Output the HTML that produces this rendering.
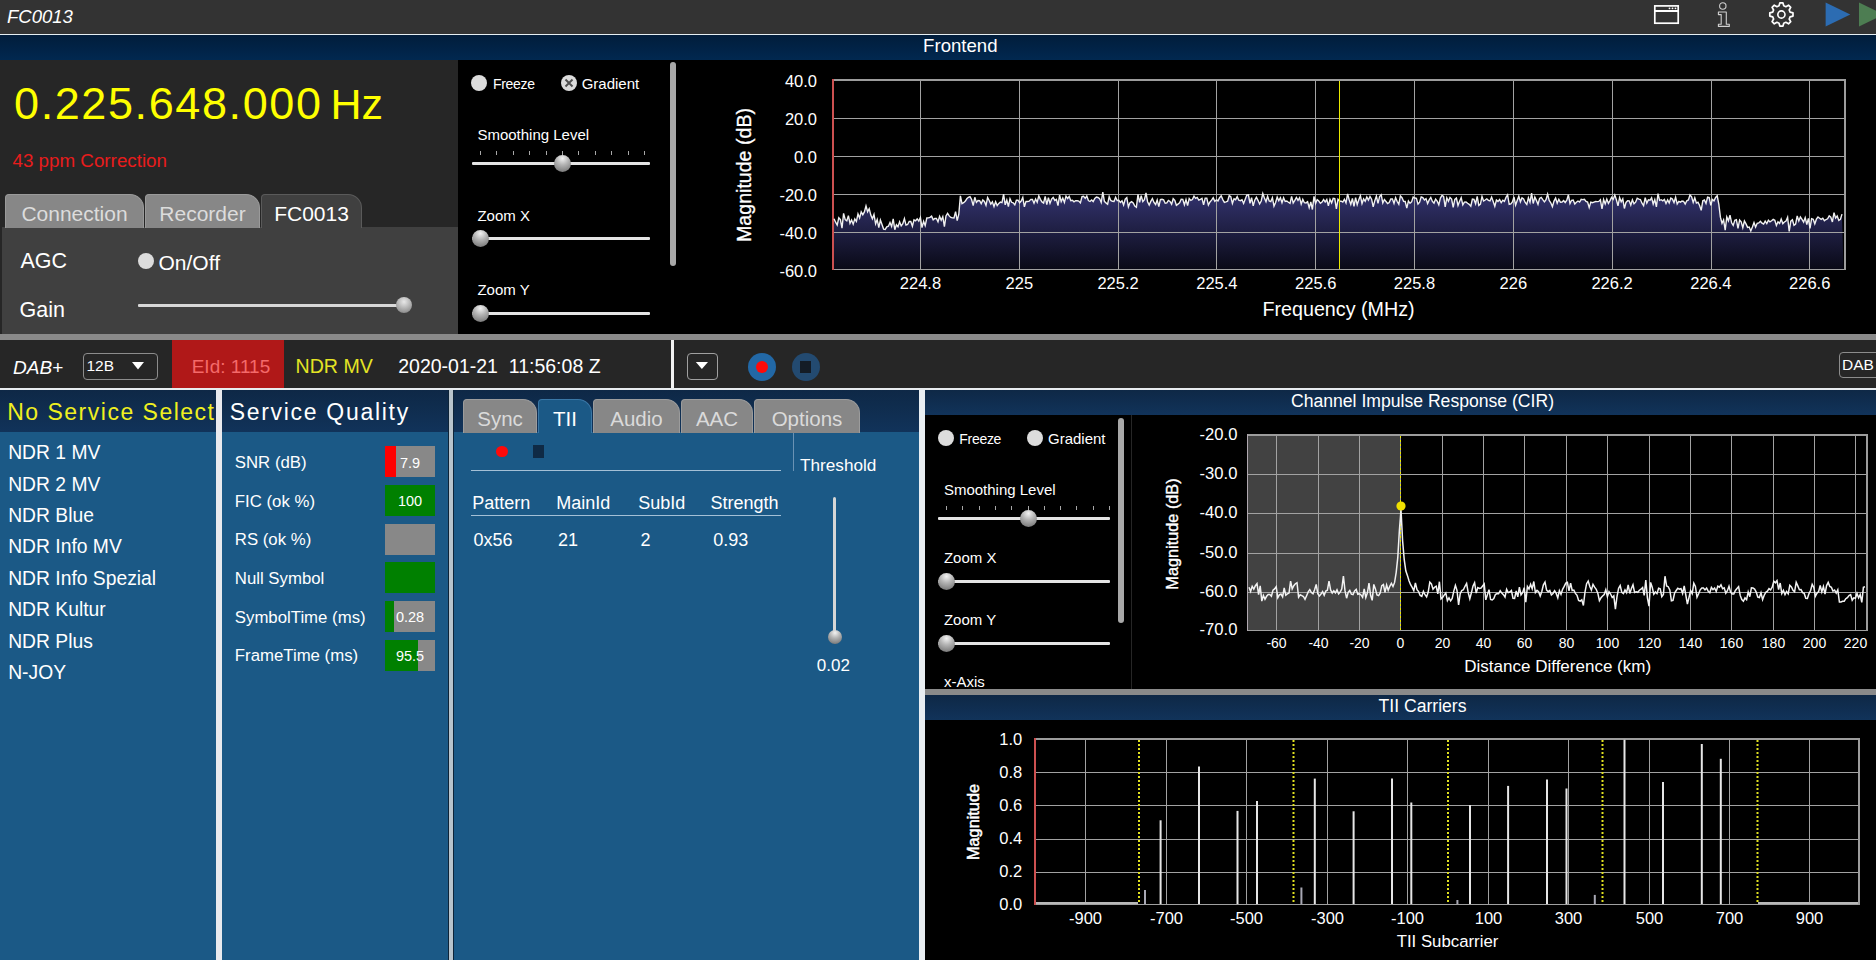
<!DOCTYPE html>
<html><head><meta charset="utf-8"><style>
html,body{margin:0;padding:0;}
body{width:1876px;height:960px;position:relative;overflow:hidden;background:#000;font-family:"Liberation Sans", sans-serif;}
div{box-sizing:border-box;}
</style></head><body>
<div style="position:absolute;left:0px;top:0px;width:1876px;height:34px;background:#333333;"></div><div style="position:absolute;left:0px;top:34px;width:1876px;height:1px;background:#e6eef2;"></div><div style="position:absolute;left:7px;top:8.34px;font-size:18.5px;line-height:18.5px;color:#fff;white-space:nowrap;font-style:italic;">FC0013</div><svg style="position:absolute;left:0;top:0" width="1876" height="34"><rect x="1654.8" y="5.9" width="23.4" height="17.3" fill="none" stroke="#fff" stroke-width="1.7"/><rect x="1654.8" y="10" width="23.4" height="2" fill="#fff"/><circle cx="1669.5" cy="8.3" r="0.9" fill="#fff"/><circle cx="1672.5" cy="8.3" r="0.9" fill="#fff"/><circle cx="1675.5" cy="8.3" r="0.9" fill="#fff"/><circle cx="1722.8" cy="6" r="3.2" fill="none" stroke="#d0d0d0" stroke-width="1.1"/><path d="M1718.4 12 L1726.3 12 L1726.3 24.2 L1729.3 24.2 L1729.3 26.4 L1718.4 26.4 L1718.4 24.2 L1721.2 24.2 L1721.2 14.6 L1718.4 14.6 Z" fill="none" stroke="#d0d0d0" stroke-width="1.1" stroke-linejoin="round"/><path d="M1779.03 5.82 L1779.84 2.90 L1782.96 2.90 L1783.77 5.82 L1785.86 6.68 L1788.50 5.20 L1790.70 7.40 L1789.22 10.04 L1790.08 12.13 L1793.00 12.94 L1793.00 16.06 L1790.08 16.87 L1789.22 18.96 L1790.70 21.60 L1788.50 23.80 L1785.86 22.32 L1783.77 23.18 L1782.96 26.10 L1779.84 26.10 L1779.03 23.18 L1776.94 22.32 L1774.30 23.80 L1772.10 21.60 L1773.58 18.96 L1772.72 16.87 L1769.80 16.06 L1769.80 12.94 L1772.72 12.13 L1773.58 10.04 L1772.10 7.40 L1774.30 5.20 L1776.94 6.68 Z" fill="none" stroke="#fff" stroke-width="1.7" stroke-linejoin="round"/><circle cx="1781.4" cy="14.5" r="3.6" fill="none" stroke="#fff" stroke-width="1.6"/><path d="M1825.6 2.5 L1850.3 14.5 L1825.6 26.6 Z" fill="#2c6cb2"/><path d="M1859 2.5 L1883.7 14.5 L1859 26.6 Z" fill="#4d7d52"/></svg><div style="position:absolute;left:0px;top:35px;width:1876px;height:25px;background:linear-gradient(#011d3b,#012850);"></div><div style="position:absolute;left:660.3px;width:600px;text-align:center;top:36.96px;font-size:18.6px;line-height:18.6px;color:#fff;white-space:nowrap;">Frontend</div><div style="position:absolute;left:0px;top:60px;width:458px;height:274px;background:#262626;"></div><div style="position:absolute;left:14px;top:80.91px;font-size:45px;line-height:45px;color:#ffff00;white-space:nowrap;letter-spacing:1.6px;">0.225.648.000</div><div style="position:absolute;left:330.5px;top:82.60px;font-size:43px;line-height:43px;color:#ffff00;white-space:nowrap;">Hz</div><div style="position:absolute;left:12.5px;top:151.89px;font-size:18.8px;line-height:18.8px;color:#e81c1c;white-space:nowrap;">43 ppm Correction</div><div style="position:absolute;left:2px;top:227px;width:456px;height:107px;background:#404040;"></div><div style="position:absolute;left:5px;top:194px;width:139px;height:34px;background:#878787;border-radius:4px 14px 0 0;border:1px solid #9a9a9a;border-bottom:none;"></div><div style="position:absolute;left:-225.5px;width:600px;text-align:center;top:203.22px;font-size:21px;line-height:21px;color:#dcdcdc;white-space:nowrap;">Connection</div><div style="position:absolute;left:145px;top:194px;width:115px;height:34px;background:#878787;border-radius:4px 14px 0 0;border:1px solid #9a9a9a;border-bottom:none;"></div><div style="position:absolute;left:-97.5px;width:600px;text-align:center;top:203.22px;font-size:21px;line-height:21px;color:#dcdcdc;white-space:nowrap;">Recorder</div><div style="position:absolute;left:261px;top:194px;width:101px;height:34px;background:#404040;border-radius:4px 14px 0 0;border:1px solid #5a5a5a;border-bottom:none;"></div><div style="position:absolute;left:11.5px;width:600px;text-align:center;top:203.22px;font-size:21px;line-height:21px;color:#ffffff;white-space:nowrap;">FC0013</div><div style="position:absolute;left:20.5px;top:250.80px;font-size:21.5px;line-height:21.5px;color:#fff;white-space:nowrap;">AGC</div><div style="position:absolute;left:138px;top:252.5px;width:16px;height:16px;border-radius:50%;background:#dcdcdc;"></div><div style="position:absolute;left:158.5px;top:251.92px;font-size:21px;line-height:21px;color:#fff;white-space:nowrap;">On/Off</div><div style="position:absolute;left:19.5px;top:300.30px;font-size:21.5px;line-height:21.5px;color:#fff;white-space:nowrap;">Gain</div><div style="position:absolute;left:138px;top:304px;width:264px;height:3px;background:#d8d8d8;border-radius:1px;"></div><div style="position:absolute;left:396px;top:297px;width:16px;height:16px;border-radius:50%;background:radial-gradient(circle at 50% 30%,#e8e8e8,#9a9a9a 70%,#707070);"></div><div style="position:absolute;left:458px;top:60px;width:1418px;height:274px;background:#000;"></div><div style="position:absolute;left:471px;top:75.3px;width:16px;height:16px;border-radius:50%;background:#dcdcdc;"></div><div style="position:absolute;left:492.9px;top:77.15px;font-size:14px;line-height:14px;color:#fff;white-space:nowrap;letter-spacing:-0.3px;">Freeze</div><div style="position:absolute;left:560.5px;top:75.3px;width:16px;height:16px;border-radius:50%;background:#dcdcdc;"></div><svg style="position:absolute;left:560.5px;top:75.3px;" width="16" height="16"><path d="M4.5 4.5L11.5 11.5M11.5 4.5L4.5 11.5" stroke="#505050" stroke-width="1.9"/></svg><div style="position:absolute;left:581.7px;top:76.30px;font-size:15px;line-height:15px;color:#fff;white-space:nowrap;">Gradient</div><div style="position:absolute;left:477.4px;top:127.00px;font-size:15px;line-height:15px;color:#fff;white-space:nowrap;">Smoothing Level</div><div style="position:absolute;left:480px;top:150.5px;width:1px;height:4px;background:#a8a8a8;"></div><div style="position:absolute;left:496px;top:150.5px;width:1px;height:4px;background:#a8a8a8;"></div><div style="position:absolute;left:513px;top:150.5px;width:1px;height:4px;background:#a8a8a8;"></div><div style="position:absolute;left:529px;top:150.5px;width:1px;height:4px;background:#a8a8a8;"></div><div style="position:absolute;left:546px;top:150.5px;width:1px;height:4px;background:#a8a8a8;"></div><div style="position:absolute;left:562px;top:150.5px;width:1px;height:4px;background:#a8a8a8;"></div><div style="position:absolute;left:578px;top:150.5px;width:1px;height:4px;background:#a8a8a8;"></div><div style="position:absolute;left:595px;top:150.5px;width:1px;height:4px;background:#a8a8a8;"></div><div style="position:absolute;left:611px;top:150.5px;width:1px;height:4px;background:#a8a8a8;"></div><div style="position:absolute;left:628px;top:150.5px;width:1px;height:4px;background:#a8a8a8;"></div><div style="position:absolute;left:644px;top:150.5px;width:1px;height:4px;background:#a8a8a8;"></div><div style="position:absolute;left:472px;top:161.8px;width:178px;height:3px;background:#e4e4e4;border-radius:1px;"></div><div style="position:absolute;left:553.5px;top:154.8px;width:17.0px;height:17.0px;border-radius:50%;background:radial-gradient(circle at 50% 20%,#f2f2f2 0%,#b4b4b4 40%,#6e6e6e 95%);"></div><div style="position:absolute;left:477.4px;top:207.70px;font-size:15px;line-height:15px;color:#fff;white-space:nowrap;">Zoom X</div><div style="position:absolute;left:472px;top:236.7px;width:178px;height:3px;background:#e4e4e4;border-radius:1px;"></div><div style="position:absolute;left:471.5px;top:229.7px;width:17.0px;height:17.0px;border-radius:50%;background:radial-gradient(circle at 50% 20%,#f2f2f2 0%,#b4b4b4 40%,#6e6e6e 95%);"></div><div style="position:absolute;left:477.4px;top:282.00px;font-size:15px;line-height:15px;color:#fff;white-space:nowrap;">Zoom Y</div><div style="position:absolute;left:472px;top:311.9px;width:178px;height:3px;background:#e4e4e4;border-radius:1px;"></div><div style="position:absolute;left:471.5px;top:304.9px;width:17.0px;height:17.0px;border-radius:50%;background:radial-gradient(circle at 50% 20%,#f2f2f2 0%,#b4b4b4 40%,#6e6e6e 95%);"></div><div style="position:absolute;left:670px;top:62px;width:6px;height:204px;background:#a8a8a8;border-radius:3px;"></div><svg style="position:absolute;left:0;top:0;" width="1876" height="960"><defs><linearGradient id="sg" x1="0" y1="195" x2="0" y2="269" gradientUnits="userSpaceOnUse"><stop offset="0" stop-color="#32326c"/><stop offset="1" stop-color="#0a0a17"/></linearGradient></defs><path d="M834.0 218.8 L835.6 222.2 L837.2 225.1 L838.8 217.8 L840.4 219.5 L842.0 228.2 L843.6 213.3 L845.2 219.7 L846.8 220.9 L848.4 215.6 L850.0 223.4 L851.6 220.0 L853.2 224.2 L854.8 218.9 L856.4 221.5 L858.0 213.9 L859.6 217.9 L861.2 211.8 L862.8 214.7 L864.4 211.9 L866.0 205.9 L867.6 211.8 L869.2 208.7 L870.8 215.1 L872.4 218.8 L874.0 214.5 L875.6 223.8 L877.2 219.5 L878.8 227.7 L880.4 220.1 L882.0 224.5 L883.6 229.1 L885.2 229.4 L886.8 226.8 L888.4 226.2 L890.0 222.5 L891.6 226.4 L893.2 218.9 L894.8 229.7 L896.4 224.7 L898.0 226.7 L899.6 221.9 L901.2 225.9 L902.8 223.6 L904.4 218.6 L906.0 225.1 L907.6 224.5 L909.2 221.4 L910.8 221.5 L912.4 226.2 L914.0 219.9 L915.6 220.8 L917.2 218.8 L918.8 221.1 L920.4 217.5 L922.0 227.7 L923.6 221.4 L925.2 225.6 L926.8 218.0 L928.4 217.9 L930.0 217.4 L931.6 216.1 L933.2 219.8 L934.8 218.5 L936.4 218.5 L938.0 221.8 L939.6 216.3 L941.2 220.3 L942.8 216.7 L944.4 226.7 L946.0 216.0 L947.6 213.4 L949.2 215.9 L950.8 217.4 L952.4 217.9 L954.0 218.0 L955.6 211.6 L957.2 220.6 L958.8 214.2 L960.4 195.8 L962.0 203.6 L963.6 202.7 L965.2 201.3 L966.8 198.8 L968.4 197.3 L970.0 196.6 L971.6 199.5 L973.2 205.7 L974.8 197.3 L976.4 202.4 L978.0 200.5 L979.6 200.7 L981.2 203.7 L982.8 199.9 L984.4 201.4 L986.0 205.3 L987.6 197.6 L989.2 200.5 L990.8 204.1 L992.4 201.8 L994.0 206.6 L995.6 201.7 L997.2 205.5 L998.8 203.4 L1000.4 202.1 L1002.0 202.6 L1003.6 194.2 L1005.2 204.8 L1006.8 200.0 L1008.4 206.5 L1010.0 198.7 L1011.6 202.3 L1013.2 202.8 L1014.8 204.9 L1016.4 200.2 L1018.0 200.2 L1019.6 202.8 L1021.2 201.0 L1022.8 197.4 L1024.4 206.8 L1026.0 201.4 L1027.6 201.5 L1029.2 201.2 L1030.8 199.4 L1032.4 199.5 L1034.0 203.2 L1035.6 199.0 L1037.2 202.2 L1038.8 195.9 L1040.4 199.3 L1042.0 201.9 L1043.6 203.0 L1045.2 196.3 L1046.8 204.6 L1048.4 197.6 L1050.0 203.3 L1051.6 199.1 L1053.2 197.5 L1054.8 200.4 L1056.4 199.4 L1058.0 205.7 L1059.6 195.1 L1061.2 201.6 L1062.8 198.1 L1064.4 202.4 L1066.0 196.2 L1067.6 198.5 L1069.2 196.5 L1070.8 200.7 L1072.4 200.3 L1074.0 201.8 L1075.6 200.7 L1077.2 200.8 L1078.8 201.1 L1080.4 202.9 L1082.0 196.5 L1083.6 196.2 L1085.2 198.4 L1086.8 196.0 L1088.4 200.6 L1090.0 201.5 L1091.6 200.0 L1093.2 201.6 L1094.8 198.4 L1096.4 197.0 L1098.0 197.5 L1099.6 198.6 L1101.2 202.4 L1102.8 192.2 L1104.4 201.3 L1106.0 202.9 L1107.6 204.2 L1109.2 196.7 L1110.8 200.5 L1112.4 201.3 L1114.0 201.5 L1115.6 197.2 L1117.2 200.5 L1118.8 200.3 L1120.4 202.5 L1122.0 200.8 L1123.6 205.0 L1125.2 199.2 L1126.8 197.7 L1128.4 206.8 L1130.0 202.6 L1131.6 201.6 L1133.2 202.9 L1134.8 206.0 L1136.4 207.2 L1138.0 194.3 L1139.6 202.3 L1141.2 195.6 L1142.8 201.6 L1144.4 199.6 L1146.0 193.0 L1147.6 201.7 L1149.2 205.1 L1150.8 201.4 L1152.4 198.6 L1154.0 202.5 L1155.6 204.6 L1157.2 199.9 L1158.8 206.6 L1160.4 199.7 L1162.0 199.3 L1163.6 199.9 L1165.2 203.3 L1166.8 202.9 L1168.4 200.4 L1170.0 201.5 L1171.6 204.3 L1173.2 198.7 L1174.8 200.3 L1176.4 205.3 L1178.0 204.1 L1179.6 202.9 L1181.2 199.2 L1182.8 199.4 L1184.4 204.9 L1186.0 199.6 L1187.6 205.6 L1189.2 198.6 L1190.8 200.4 L1192.4 199.6 L1194.0 196.2 L1195.6 198.4 L1197.2 197.4 L1198.8 200.0 L1200.4 199.3 L1202.0 198.3 L1203.6 204.9 L1205.2 198.1 L1206.8 198.1 L1208.4 205.1 L1210.0 202.0 L1211.6 200.2 L1213.2 197.7 L1214.8 201.4 L1216.4 199.8 L1218.0 200.9 L1219.6 197.7 L1221.2 195.8 L1222.8 199.6 L1224.4 202.4 L1226.0 201.9 L1227.6 201.2 L1229.2 195.7 L1230.8 196.7 L1232.4 203.4 L1234.0 198.8 L1235.6 199.7 L1237.2 196.7 L1238.8 200.2 L1240.4 200.7 L1242.0 199.8 L1243.6 203.4 L1245.2 199.3 L1246.8 195.1 L1248.4 194.9 L1250.0 203.3 L1251.6 197.6 L1253.2 205.9 L1254.8 200.0 L1256.4 197.3 L1258.0 200.3 L1259.6 204.0 L1261.2 201.0 L1262.8 193.5 L1264.4 198.1 L1266.0 201.8 L1267.6 196.3 L1269.2 201.0 L1270.8 201.6 L1272.4 197.7 L1274.0 206.2 L1275.6 202.5 L1277.2 197.1 L1278.8 200.7 L1280.4 197.7 L1282.0 202.8 L1283.6 197.8 L1285.2 201.5 L1286.8 201.0 L1288.4 202.3 L1290.0 203.3 L1291.6 196.4 L1293.2 203.0 L1294.8 200.4 L1296.4 197.5 L1298.0 200.3 L1299.6 197.7 L1301.2 204.1 L1302.8 199.4 L1304.4 202.7 L1306.0 202.9 L1307.6 201.7 L1309.2 207.7 L1310.8 202.0 L1312.4 209.5 L1314.0 196.3 L1315.6 203.5 L1317.2 199.6 L1318.8 201.0 L1320.4 203.3 L1322.0 202.1 L1323.6 199.5 L1325.2 201.9 L1326.8 199.5 L1328.4 205.8 L1330.0 199.3 L1331.6 202.8 L1333.2 198.4 L1334.8 198.7 L1336.4 208.9 L1338.0 199.3 L1339.6 201.0 L1341.2 201.2 L1342.8 202.1 L1344.4 199.2 L1346.0 202.8 L1347.6 193.9 L1349.2 199.8 L1350.8 204.4 L1352.4 198.5 L1354.0 206.3 L1355.6 197.6 L1357.2 204.7 L1358.8 199.8 L1360.4 195.7 L1362.0 203.5 L1363.6 198.9 L1365.2 201.3 L1366.8 197.0 L1368.4 200.1 L1370.0 196.5 L1371.6 199.2 L1373.2 206.9 L1374.8 200.7 L1376.4 196.0 L1378.0 203.3 L1379.6 196.6 L1381.2 194.8 L1382.8 203.0 L1384.4 199.5 L1386.0 201.5 L1387.6 203.5 L1389.2 202.6 L1390.8 199.0 L1392.4 198.9 L1394.0 203.4 L1395.6 197.6 L1397.2 201.5 L1398.8 204.2 L1400.4 195.9 L1402.0 197.7 L1403.6 201.3 L1405.2 201.5 L1406.8 208.1 L1408.4 200.9 L1410.0 203.3 L1411.6 201.9 L1413.2 197.1 L1414.8 198.0 L1416.4 198.4 L1418.0 204.1 L1419.6 202.2 L1421.2 196.9 L1422.8 197.6 L1424.4 200.0 L1426.0 198.6 L1427.6 203.5 L1429.2 199.9 L1430.8 197.4 L1432.4 201.4 L1434.0 203.1 L1435.6 199.1 L1437.2 201.2 L1438.8 204.8 L1440.4 198.0 L1442.0 195.5 L1443.6 196.5 L1445.2 207.0 L1446.8 197.8 L1448.4 201.2 L1450.0 197.4 L1451.6 199.0 L1453.2 207.4 L1454.8 199.4 L1456.4 198.1 L1458.0 205.5 L1459.6 201.2 L1461.2 197.7 L1462.8 204.9 L1464.4 202.1 L1466.0 201.9 L1467.6 203.3 L1469.2 204.4 L1470.8 206.2 L1472.4 199.1 L1474.0 199.4 L1475.6 203.7 L1477.2 196.4 L1478.8 205.4 L1480.4 204.1 L1482.0 196.6 L1483.6 201.0 L1485.2 200.0 L1486.8 198.8 L1488.4 200.3 L1490.0 200.9 L1491.6 197.1 L1493.2 201.6 L1494.8 206.3 L1496.4 200.0 L1498.0 201.4 L1499.6 199.6 L1501.2 202.7 L1502.8 200.2 L1504.4 201.4 L1506.0 197.4 L1507.6 194.9 L1509.2 204.4 L1510.8 203.9 L1512.4 202.0 L1514.0 197.0 L1515.6 205.1 L1517.2 200.5 L1518.8 196.2 L1520.4 201.8 L1522.0 197.9 L1523.6 198.9 L1525.2 202.5 L1526.8 204.5 L1528.4 197.8 L1530.0 202.3 L1531.6 193.1 L1533.2 203.5 L1534.8 197.1 L1536.4 200.4 L1538.0 204.3 L1539.6 198.4 L1541.2 197.4 L1542.8 199.7 L1544.4 201.8 L1546.0 199.6 L1547.6 194.2 L1549.2 200.5 L1550.8 202.8 L1552.4 206.6 L1554.0 201.1 L1555.6 198.1 L1557.2 203.2 L1558.8 199.3 L1560.4 202.2 L1562.0 202.0 L1563.6 200.6 L1565.2 202.5 L1566.8 200.1 L1568.4 194.8 L1570.0 203.5 L1571.6 200.3 L1573.2 200.1 L1574.8 204.0 L1576.4 202.3 L1578.0 201.0 L1579.6 202.0 L1581.2 199.3 L1582.8 199.6 L1584.4 199.3 L1586.0 201.5 L1587.6 202.1 L1589.2 207.6 L1590.8 202.1 L1592.4 202.7 L1594.0 202.1 L1595.6 201.5 L1597.2 201.6 L1598.8 201.4 L1600.4 199.8 L1602.0 209.0 L1603.6 199.5 L1605.2 203.9 L1606.8 199.1 L1608.4 203.4 L1610.0 200.6 L1611.6 197.4 L1613.2 199.4 L1614.8 195.1 L1616.4 199.8 L1618.0 205.9 L1619.6 197.6 L1621.2 201.8 L1622.8 198.8 L1624.4 208.5 L1626.0 202.4 L1627.6 200.7 L1629.2 200.8 L1630.8 205.0 L1632.4 199.8 L1634.0 203.7 L1635.6 202.2 L1637.2 198.2 L1638.8 199.2 L1640.4 199.5 L1642.0 203.2 L1643.6 205.7 L1645.2 197.6 L1646.8 203.1 L1648.4 199.9 L1650.0 200.3 L1651.6 197.8 L1653.2 204.0 L1654.8 199.5 L1656.4 206.8 L1658.0 193.6 L1659.6 200.3 L1661.2 199.7 L1662.8 200.8 L1664.4 199.4 L1666.0 203.5 L1667.6 199.9 L1669.2 202.9 L1670.8 198.1 L1672.4 199.1 L1674.0 202.6 L1675.6 197.3 L1677.2 204.0 L1678.8 201.4 L1680.4 202.1 L1682.0 201.1 L1683.6 201.4 L1685.2 204.1 L1686.8 200.8 L1688.4 200.0 L1690.0 194.9 L1691.6 196.8 L1693.2 202.5 L1694.8 197.8 L1696.4 203.1 L1698.0 202.3 L1699.6 205.5 L1701.2 210.4 L1702.8 200.8 L1704.4 200.0 L1706.0 203.5 L1707.6 197.2 L1709.2 197.6 L1710.8 205.3 L1712.4 199.4 L1714.0 200.8 L1715.6 197.4 L1717.2 195.8 L1718.8 204.0 L1720.4 217.2 L1722.0 223.3 L1723.6 219.8 L1725.2 230.1 L1726.8 217.0 L1728.4 220.8 L1730.0 215.2 L1731.6 222.8 L1733.2 225.4 L1734.8 220.4 L1736.4 219.8 L1738.0 228.4 L1739.6 220.0 L1741.2 221.8 L1742.8 227.6 L1744.4 221.0 L1746.0 223.9 L1747.6 227.4 L1749.2 227.1 L1750.8 231.0 L1752.4 227.0 L1754.0 222.5 L1755.6 227.1 L1757.2 223.3 L1758.8 222.9 L1760.4 221.3 L1762.0 223.2 L1763.6 224.1 L1765.2 221.2 L1766.8 223.6 L1768.4 220.2 L1770.0 221.9 L1771.6 220.8 L1773.2 219.4 L1774.8 220.3 L1776.4 225.5 L1778.0 221.8 L1779.6 223.5 L1781.2 219.0 L1782.8 223.6 L1784.4 222.0 L1786.0 221.0 L1787.6 217.3 L1789.2 231.3 L1790.8 221.1 L1792.4 219.8 L1794.0 225.3 L1795.6 224.1 L1797.2 216.0 L1798.8 221.0 L1800.4 216.9 L1802.0 219.3 L1803.6 222.0 L1805.2 217.6 L1806.8 224.5 L1808.4 218.4 L1810.0 228.4 L1811.6 218.6 L1813.2 219.2 L1814.8 223.8 L1816.4 219.2 L1818.0 217.0 L1819.6 218.2 L1821.2 219.4 L1822.8 218.2 L1824.4 220.7 L1826.0 219.5 L1827.6 218.8 L1829.2 215.8 L1830.8 217.2 L1832.4 221.9 L1834.0 212.7 L1835.6 218.1 L1837.2 216.0 L1838.8 220.4 L1840.4 219.4 L1842.0 214.1 L1843.5 269 L834 269 Z" fill="url(#sg)"/></svg><div style="position:absolute;left:920px;top:81px;width:1px;height:188px;background:#a2a2a2;"></div><div style="position:absolute;left:1019px;top:81px;width:1px;height:188px;background:#a2a2a2;"></div><div style="position:absolute;left:1118px;top:81px;width:1px;height:188px;background:#a2a2a2;"></div><div style="position:absolute;left:1216px;top:81px;width:1px;height:188px;background:#a2a2a2;"></div><div style="position:absolute;left:1315px;top:81px;width:1px;height:188px;background:#a2a2a2;"></div><div style="position:absolute;left:1414px;top:81px;width:1px;height:188px;background:#a2a2a2;"></div><div style="position:absolute;left:1513px;top:81px;width:1px;height:188px;background:#a2a2a2;"></div><div style="position:absolute;left:1612px;top:81px;width:1px;height:188px;background:#a2a2a2;"></div><div style="position:absolute;left:1711px;top:81px;width:1px;height:188px;background:#a2a2a2;"></div><div style="position:absolute;left:1809px;top:81px;width:1px;height:188px;background:#a2a2a2;"></div><div style="position:absolute;left:834px;top:118px;width:1010px;height:1px;background:#a2a2a2;"></div><div style="position:absolute;left:834px;top:156px;width:1010px;height:1px;background:#a2a2a2;"></div><div style="position:absolute;left:834px;top:194px;width:1010px;height:1px;background:#a2a2a2;"></div><div style="position:absolute;left:834px;top:232px;width:1010px;height:1px;background:#a2a2a2;"></div><div style="position:absolute;left:832px;top:79px;width:1014px;height:2px;background:#9c9c9c;"></div><div style="position:absolute;left:834px;top:269px;width:1012px;height:1px;background:#a0a0a0;"></div><div style="position:absolute;left:1844px;top:79px;width:2px;height:191px;background:#9c9c9c;"></div><div style="position:absolute;left:832px;top:79px;width:2px;height:191px;background:#cc5050;"></div><svg style="position:absolute;left:0;top:0;" width="1876" height="960"><path d="M834.0 218.8 L835.6 222.2 L837.2 225.1 L838.8 217.8 L840.4 219.5 L842.0 228.2 L843.6 213.3 L845.2 219.7 L846.8 220.9 L848.4 215.6 L850.0 223.4 L851.6 220.0 L853.2 224.2 L854.8 218.9 L856.4 221.5 L858.0 213.9 L859.6 217.9 L861.2 211.8 L862.8 214.7 L864.4 211.9 L866.0 205.9 L867.6 211.8 L869.2 208.7 L870.8 215.1 L872.4 218.8 L874.0 214.5 L875.6 223.8 L877.2 219.5 L878.8 227.7 L880.4 220.1 L882.0 224.5 L883.6 229.1 L885.2 229.4 L886.8 226.8 L888.4 226.2 L890.0 222.5 L891.6 226.4 L893.2 218.9 L894.8 229.7 L896.4 224.7 L898.0 226.7 L899.6 221.9 L901.2 225.9 L902.8 223.6 L904.4 218.6 L906.0 225.1 L907.6 224.5 L909.2 221.4 L910.8 221.5 L912.4 226.2 L914.0 219.9 L915.6 220.8 L917.2 218.8 L918.8 221.1 L920.4 217.5 L922.0 227.7 L923.6 221.4 L925.2 225.6 L926.8 218.0 L928.4 217.9 L930.0 217.4 L931.6 216.1 L933.2 219.8 L934.8 218.5 L936.4 218.5 L938.0 221.8 L939.6 216.3 L941.2 220.3 L942.8 216.7 L944.4 226.7 L946.0 216.0 L947.6 213.4 L949.2 215.9 L950.8 217.4 L952.4 217.9 L954.0 218.0 L955.6 211.6 L957.2 220.6 L958.8 214.2 L960.4 195.8 L962.0 203.6 L963.6 202.7 L965.2 201.3 L966.8 198.8 L968.4 197.3 L970.0 196.6 L971.6 199.5 L973.2 205.7 L974.8 197.3 L976.4 202.4 L978.0 200.5 L979.6 200.7 L981.2 203.7 L982.8 199.9 L984.4 201.4 L986.0 205.3 L987.6 197.6 L989.2 200.5 L990.8 204.1 L992.4 201.8 L994.0 206.6 L995.6 201.7 L997.2 205.5 L998.8 203.4 L1000.4 202.1 L1002.0 202.6 L1003.6 194.2 L1005.2 204.8 L1006.8 200.0 L1008.4 206.5 L1010.0 198.7 L1011.6 202.3 L1013.2 202.8 L1014.8 204.9 L1016.4 200.2 L1018.0 200.2 L1019.6 202.8 L1021.2 201.0 L1022.8 197.4 L1024.4 206.8 L1026.0 201.4 L1027.6 201.5 L1029.2 201.2 L1030.8 199.4 L1032.4 199.5 L1034.0 203.2 L1035.6 199.0 L1037.2 202.2 L1038.8 195.9 L1040.4 199.3 L1042.0 201.9 L1043.6 203.0 L1045.2 196.3 L1046.8 204.6 L1048.4 197.6 L1050.0 203.3 L1051.6 199.1 L1053.2 197.5 L1054.8 200.4 L1056.4 199.4 L1058.0 205.7 L1059.6 195.1 L1061.2 201.6 L1062.8 198.1 L1064.4 202.4 L1066.0 196.2 L1067.6 198.5 L1069.2 196.5 L1070.8 200.7 L1072.4 200.3 L1074.0 201.8 L1075.6 200.7 L1077.2 200.8 L1078.8 201.1 L1080.4 202.9 L1082.0 196.5 L1083.6 196.2 L1085.2 198.4 L1086.8 196.0 L1088.4 200.6 L1090.0 201.5 L1091.6 200.0 L1093.2 201.6 L1094.8 198.4 L1096.4 197.0 L1098.0 197.5 L1099.6 198.6 L1101.2 202.4 L1102.8 192.2 L1104.4 201.3 L1106.0 202.9 L1107.6 204.2 L1109.2 196.7 L1110.8 200.5 L1112.4 201.3 L1114.0 201.5 L1115.6 197.2 L1117.2 200.5 L1118.8 200.3 L1120.4 202.5 L1122.0 200.8 L1123.6 205.0 L1125.2 199.2 L1126.8 197.7 L1128.4 206.8 L1130.0 202.6 L1131.6 201.6 L1133.2 202.9 L1134.8 206.0 L1136.4 207.2 L1138.0 194.3 L1139.6 202.3 L1141.2 195.6 L1142.8 201.6 L1144.4 199.6 L1146.0 193.0 L1147.6 201.7 L1149.2 205.1 L1150.8 201.4 L1152.4 198.6 L1154.0 202.5 L1155.6 204.6 L1157.2 199.9 L1158.8 206.6 L1160.4 199.7 L1162.0 199.3 L1163.6 199.9 L1165.2 203.3 L1166.8 202.9 L1168.4 200.4 L1170.0 201.5 L1171.6 204.3 L1173.2 198.7 L1174.8 200.3 L1176.4 205.3 L1178.0 204.1 L1179.6 202.9 L1181.2 199.2 L1182.8 199.4 L1184.4 204.9 L1186.0 199.6 L1187.6 205.6 L1189.2 198.6 L1190.8 200.4 L1192.4 199.6 L1194.0 196.2 L1195.6 198.4 L1197.2 197.4 L1198.8 200.0 L1200.4 199.3 L1202.0 198.3 L1203.6 204.9 L1205.2 198.1 L1206.8 198.1 L1208.4 205.1 L1210.0 202.0 L1211.6 200.2 L1213.2 197.7 L1214.8 201.4 L1216.4 199.8 L1218.0 200.9 L1219.6 197.7 L1221.2 195.8 L1222.8 199.6 L1224.4 202.4 L1226.0 201.9 L1227.6 201.2 L1229.2 195.7 L1230.8 196.7 L1232.4 203.4 L1234.0 198.8 L1235.6 199.7 L1237.2 196.7 L1238.8 200.2 L1240.4 200.7 L1242.0 199.8 L1243.6 203.4 L1245.2 199.3 L1246.8 195.1 L1248.4 194.9 L1250.0 203.3 L1251.6 197.6 L1253.2 205.9 L1254.8 200.0 L1256.4 197.3 L1258.0 200.3 L1259.6 204.0 L1261.2 201.0 L1262.8 193.5 L1264.4 198.1 L1266.0 201.8 L1267.6 196.3 L1269.2 201.0 L1270.8 201.6 L1272.4 197.7 L1274.0 206.2 L1275.6 202.5 L1277.2 197.1 L1278.8 200.7 L1280.4 197.7 L1282.0 202.8 L1283.6 197.8 L1285.2 201.5 L1286.8 201.0 L1288.4 202.3 L1290.0 203.3 L1291.6 196.4 L1293.2 203.0 L1294.8 200.4 L1296.4 197.5 L1298.0 200.3 L1299.6 197.7 L1301.2 204.1 L1302.8 199.4 L1304.4 202.7 L1306.0 202.9 L1307.6 201.7 L1309.2 207.7 L1310.8 202.0 L1312.4 209.5 L1314.0 196.3 L1315.6 203.5 L1317.2 199.6 L1318.8 201.0 L1320.4 203.3 L1322.0 202.1 L1323.6 199.5 L1325.2 201.9 L1326.8 199.5 L1328.4 205.8 L1330.0 199.3 L1331.6 202.8 L1333.2 198.4 L1334.8 198.7 L1336.4 208.9 L1338.0 199.3 L1339.6 201.0 L1341.2 201.2 L1342.8 202.1 L1344.4 199.2 L1346.0 202.8 L1347.6 193.9 L1349.2 199.8 L1350.8 204.4 L1352.4 198.5 L1354.0 206.3 L1355.6 197.6 L1357.2 204.7 L1358.8 199.8 L1360.4 195.7 L1362.0 203.5 L1363.6 198.9 L1365.2 201.3 L1366.8 197.0 L1368.4 200.1 L1370.0 196.5 L1371.6 199.2 L1373.2 206.9 L1374.8 200.7 L1376.4 196.0 L1378.0 203.3 L1379.6 196.6 L1381.2 194.8 L1382.8 203.0 L1384.4 199.5 L1386.0 201.5 L1387.6 203.5 L1389.2 202.6 L1390.8 199.0 L1392.4 198.9 L1394.0 203.4 L1395.6 197.6 L1397.2 201.5 L1398.8 204.2 L1400.4 195.9 L1402.0 197.7 L1403.6 201.3 L1405.2 201.5 L1406.8 208.1 L1408.4 200.9 L1410.0 203.3 L1411.6 201.9 L1413.2 197.1 L1414.8 198.0 L1416.4 198.4 L1418.0 204.1 L1419.6 202.2 L1421.2 196.9 L1422.8 197.6 L1424.4 200.0 L1426.0 198.6 L1427.6 203.5 L1429.2 199.9 L1430.8 197.4 L1432.4 201.4 L1434.0 203.1 L1435.6 199.1 L1437.2 201.2 L1438.8 204.8 L1440.4 198.0 L1442.0 195.5 L1443.6 196.5 L1445.2 207.0 L1446.8 197.8 L1448.4 201.2 L1450.0 197.4 L1451.6 199.0 L1453.2 207.4 L1454.8 199.4 L1456.4 198.1 L1458.0 205.5 L1459.6 201.2 L1461.2 197.7 L1462.8 204.9 L1464.4 202.1 L1466.0 201.9 L1467.6 203.3 L1469.2 204.4 L1470.8 206.2 L1472.4 199.1 L1474.0 199.4 L1475.6 203.7 L1477.2 196.4 L1478.8 205.4 L1480.4 204.1 L1482.0 196.6 L1483.6 201.0 L1485.2 200.0 L1486.8 198.8 L1488.4 200.3 L1490.0 200.9 L1491.6 197.1 L1493.2 201.6 L1494.8 206.3 L1496.4 200.0 L1498.0 201.4 L1499.6 199.6 L1501.2 202.7 L1502.8 200.2 L1504.4 201.4 L1506.0 197.4 L1507.6 194.9 L1509.2 204.4 L1510.8 203.9 L1512.4 202.0 L1514.0 197.0 L1515.6 205.1 L1517.2 200.5 L1518.8 196.2 L1520.4 201.8 L1522.0 197.9 L1523.6 198.9 L1525.2 202.5 L1526.8 204.5 L1528.4 197.8 L1530.0 202.3 L1531.6 193.1 L1533.2 203.5 L1534.8 197.1 L1536.4 200.4 L1538.0 204.3 L1539.6 198.4 L1541.2 197.4 L1542.8 199.7 L1544.4 201.8 L1546.0 199.6 L1547.6 194.2 L1549.2 200.5 L1550.8 202.8 L1552.4 206.6 L1554.0 201.1 L1555.6 198.1 L1557.2 203.2 L1558.8 199.3 L1560.4 202.2 L1562.0 202.0 L1563.6 200.6 L1565.2 202.5 L1566.8 200.1 L1568.4 194.8 L1570.0 203.5 L1571.6 200.3 L1573.2 200.1 L1574.8 204.0 L1576.4 202.3 L1578.0 201.0 L1579.6 202.0 L1581.2 199.3 L1582.8 199.6 L1584.4 199.3 L1586.0 201.5 L1587.6 202.1 L1589.2 207.6 L1590.8 202.1 L1592.4 202.7 L1594.0 202.1 L1595.6 201.5 L1597.2 201.6 L1598.8 201.4 L1600.4 199.8 L1602.0 209.0 L1603.6 199.5 L1605.2 203.9 L1606.8 199.1 L1608.4 203.4 L1610.0 200.6 L1611.6 197.4 L1613.2 199.4 L1614.8 195.1 L1616.4 199.8 L1618.0 205.9 L1619.6 197.6 L1621.2 201.8 L1622.8 198.8 L1624.4 208.5 L1626.0 202.4 L1627.6 200.7 L1629.2 200.8 L1630.8 205.0 L1632.4 199.8 L1634.0 203.7 L1635.6 202.2 L1637.2 198.2 L1638.8 199.2 L1640.4 199.5 L1642.0 203.2 L1643.6 205.7 L1645.2 197.6 L1646.8 203.1 L1648.4 199.9 L1650.0 200.3 L1651.6 197.8 L1653.2 204.0 L1654.8 199.5 L1656.4 206.8 L1658.0 193.6 L1659.6 200.3 L1661.2 199.7 L1662.8 200.8 L1664.4 199.4 L1666.0 203.5 L1667.6 199.9 L1669.2 202.9 L1670.8 198.1 L1672.4 199.1 L1674.0 202.6 L1675.6 197.3 L1677.2 204.0 L1678.8 201.4 L1680.4 202.1 L1682.0 201.1 L1683.6 201.4 L1685.2 204.1 L1686.8 200.8 L1688.4 200.0 L1690.0 194.9 L1691.6 196.8 L1693.2 202.5 L1694.8 197.8 L1696.4 203.1 L1698.0 202.3 L1699.6 205.5 L1701.2 210.4 L1702.8 200.8 L1704.4 200.0 L1706.0 203.5 L1707.6 197.2 L1709.2 197.6 L1710.8 205.3 L1712.4 199.4 L1714.0 200.8 L1715.6 197.4 L1717.2 195.8 L1718.8 204.0 L1720.4 217.2 L1722.0 223.3 L1723.6 219.8 L1725.2 230.1 L1726.8 217.0 L1728.4 220.8 L1730.0 215.2 L1731.6 222.8 L1733.2 225.4 L1734.8 220.4 L1736.4 219.8 L1738.0 228.4 L1739.6 220.0 L1741.2 221.8 L1742.8 227.6 L1744.4 221.0 L1746.0 223.9 L1747.6 227.4 L1749.2 227.1 L1750.8 231.0 L1752.4 227.0 L1754.0 222.5 L1755.6 227.1 L1757.2 223.3 L1758.8 222.9 L1760.4 221.3 L1762.0 223.2 L1763.6 224.1 L1765.2 221.2 L1766.8 223.6 L1768.4 220.2 L1770.0 221.9 L1771.6 220.8 L1773.2 219.4 L1774.8 220.3 L1776.4 225.5 L1778.0 221.8 L1779.6 223.5 L1781.2 219.0 L1782.8 223.6 L1784.4 222.0 L1786.0 221.0 L1787.6 217.3 L1789.2 231.3 L1790.8 221.1 L1792.4 219.8 L1794.0 225.3 L1795.6 224.1 L1797.2 216.0 L1798.8 221.0 L1800.4 216.9 L1802.0 219.3 L1803.6 222.0 L1805.2 217.6 L1806.8 224.5 L1808.4 218.4 L1810.0 228.4 L1811.6 218.6 L1813.2 219.2 L1814.8 223.8 L1816.4 219.2 L1818.0 217.0 L1819.6 218.2 L1821.2 219.4 L1822.8 218.2 L1824.4 220.7 L1826.0 219.5 L1827.6 218.8 L1829.2 215.8 L1830.8 217.2 L1832.4 221.9 L1834.0 212.7 L1835.6 218.1 L1837.2 216.0 L1838.8 220.4 L1840.4 219.4 L1842.0 214.1" fill="none" stroke="#f0f0f0" stroke-width="1.4"/></svg><div style="position:absolute;left:1339px;top:81px;width:1px;height:188px;background:#e8e800;"></div><div style="position:absolute;left:620.5px;width:600px;text-align:center;top:275.03px;font-size:16.5px;line-height:16.5px;color:#fff;white-space:nowrap;">224.8</div><div style="position:absolute;left:719.3px;width:600px;text-align:center;top:275.03px;font-size:16.5px;line-height:16.5px;color:#fff;white-space:nowrap;">225</div><div style="position:absolute;left:818.0999999999999px;width:600px;text-align:center;top:275.03px;font-size:16.5px;line-height:16.5px;color:#fff;white-space:nowrap;">225.2</div><div style="position:absolute;left:916.9000000000001px;width:600px;text-align:center;top:275.03px;font-size:16.5px;line-height:16.5px;color:#fff;white-space:nowrap;">225.4</div><div style="position:absolute;left:1015.7px;width:600px;text-align:center;top:275.03px;font-size:16.5px;line-height:16.5px;color:#fff;white-space:nowrap;">225.6</div><div style="position:absolute;left:1114.5px;width:600px;text-align:center;top:275.03px;font-size:16.5px;line-height:16.5px;color:#fff;white-space:nowrap;">225.8</div><div style="position:absolute;left:1213.3px;width:600px;text-align:center;top:275.03px;font-size:16.5px;line-height:16.5px;color:#fff;white-space:nowrap;">226</div><div style="position:absolute;left:1312.1px;width:600px;text-align:center;top:275.03px;font-size:16.5px;line-height:16.5px;color:#fff;white-space:nowrap;">226.2</div><div style="position:absolute;left:1410.9px;width:600px;text-align:center;top:275.03px;font-size:16.5px;line-height:16.5px;color:#fff;white-space:nowrap;">226.4</div><div style="position:absolute;left:1509.6999999999998px;width:600px;text-align:center;top:275.03px;font-size:16.5px;line-height:16.5px;color:#fff;white-space:nowrap;">226.6</div><div style="position:absolute;left:517px;width:300px;text-align:right;top:72.53px;font-size:16.5px;line-height:16.5px;color:#fff;white-space:nowrap;">40.0</div><div style="position:absolute;left:517px;width:300px;text-align:right;top:110.53px;font-size:16.5px;line-height:16.5px;color:#fff;white-space:nowrap;">20.0</div><div style="position:absolute;left:517px;width:300px;text-align:right;top:148.53px;font-size:16.5px;line-height:16.5px;color:#fff;white-space:nowrap;">0.0</div><div style="position:absolute;left:517px;width:300px;text-align:right;top:186.53px;font-size:16.5px;line-height:16.5px;color:#fff;white-space:nowrap;">-20.0</div><div style="position:absolute;left:517px;width:300px;text-align:right;top:224.53px;font-size:16.5px;line-height:16.5px;color:#fff;white-space:nowrap;">-40.0</div><div style="position:absolute;left:517px;width:300px;text-align:right;top:262.53px;font-size:16.5px;line-height:16.5px;color:#fff;white-space:nowrap;">-60.0</div><div style="position:absolute;left:1038.5px;width:600px;text-align:center;top:300.02px;font-size:19.7px;line-height:19.7px;color:#fff;white-space:nowrap;">Frequency (MHz)</div><div style="position:absolute;left:594px;top:165.4px;width:300px;height:20px;line-height:20px;text-align:center;font-size:19.6px;-webkit-text-stroke:0.3px #fff;color:#fff;transform:rotate(-90deg);white-space:nowrap;">Magnitude (dB)</div><div style="position:absolute;left:0px;top:334px;width:1876px;height:6px;background:#8a8a8a;"></div><div style="position:absolute;left:0px;top:340px;width:1876px;height:48px;background:#262626;"></div><div style="position:absolute;left:0px;top:388px;width:1876px;height:2px;background:#e8ecef;"></div><div style="position:absolute;left:0px;top:390px;width:216px;height:570px;background:#1b5986;"></div><div style="position:absolute;left:0px;top:390px;width:216px;height:42px;background:linear-gradient(#0e2846,#11335a);"></div><div style="position:absolute;left:222px;top:390px;width:226px;height:570px;background:#1b5986;"></div><div style="position:absolute;left:222px;top:390px;width:226px;height:42px;background:linear-gradient(#0e2846,#11335a);"></div><div style="position:absolute;left:919px;top:390px;width:6px;height:570px;background:#e9eef2;"></div><div style="position:absolute;left:925px;top:390px;width:951px;height:570px;background:#000;"></div><div style="position:absolute;left:925px;top:390px;width:951px;height:25px;background:linear-gradient(#0e2846,#11335a);"></div><div style="position:absolute;left:925px;top:689px;width:951px;height:6px;background:#8a8a8a;"></div><div style="position:absolute;left:925px;top:695px;width:951px;height:25px;background:linear-gradient(#0e2846,#11335a);"></div><div style="position:absolute;left:13px;top:357.82px;font-size:19px;line-height:19px;color:#fff;white-space:nowrap;font-style:italic;">DAB+</div><div style="position:absolute;left:83px;top:353px;width:75px;height:27px;border:1.5px solid #8c8c8c;border-radius:4px;"></div><div style="position:absolute;left:86.4px;top:357.88px;font-size:15.5px;line-height:15.5px;color:#fff;white-space:nowrap;">12B</div><svg style="position:absolute;left:0;top:0" width="900" height="400"><path d="M132 362 L144 362 L138 369.6 Z" fill="#fff"/><path d="M695.8 362 L708 362 L701.9 369 Z" fill="#fff"/></svg><div style="position:absolute;left:172px;top:340px;width:112px;height:48px;background:#b01818;"></div><div style="position:absolute;left:191.7px;top:357.02px;font-size:19px;line-height:19px;color:#f46a6a;white-space:nowrap;">EId: 1115</div><div style="position:absolute;left:295.5px;top:356.51px;font-size:19.6px;line-height:19.6px;color:#e4e424;white-space:nowrap;">NDR MV</div><div style="position:absolute;left:398.2px;top:356.59px;font-size:19.5px;line-height:19.5px;color:#fff;white-space:nowrap;">2020-01-21&nbsp;&nbsp;11:56:08 Z</div><div style="position:absolute;left:671px;top:340px;width:3px;height:48px;background:#f2f2f2;"></div><div style="position:absolute;left:687px;top:353px;width:31px;height:27px;border:1.5px solid #a0a0a0;border-radius:4px;"></div><div style="position:absolute;left:748px;top:352.8px;width:28px;height:28px;border-radius:50%;background:#2268a6;"></div><div style="position:absolute;left:756px;top:360.6px;width:12.4px;height:12.4px;border-radius:50%;background:#ff0a0a;"></div><div style="position:absolute;left:792px;top:352.8px;width:28px;height:28px;border-radius:50%;background:#234a70;"></div><div style="position:absolute;left:800px;top:361px;width:11px;height:12px;background:#141c26;"></div><div style="position:absolute;left:1839px;top:351.5px;width:50px;height:26px;border:1.5px solid #8c8c8c;border-radius:4px;"></div><div style="position:absolute;left:1842px;top:357.38px;font-size:15.5px;line-height:15.5px;color:#fff;white-space:nowrap;">DAB</div><div style="position:absolute;left:7.2px;top:400.93px;font-size:23px;line-height:23px;color:#f0f020;white-space:nowrap;letter-spacing:1.5px;">No Service Select</div><div style="position:absolute;left:8.2px;top:443.16px;font-size:19.3px;line-height:19.3px;color:#fff;white-space:nowrap;">NDR 1 MV</div><div style="position:absolute;left:8.2px;top:474.56px;font-size:19.3px;line-height:19.3px;color:#fff;white-space:nowrap;">NDR 2 MV</div><div style="position:absolute;left:8.2px;top:505.96px;font-size:19.3px;line-height:19.3px;color:#fff;white-space:nowrap;">NDR Blue</div><div style="position:absolute;left:8.2px;top:537.36px;font-size:19.3px;line-height:19.3px;color:#fff;white-space:nowrap;">NDR Info MV</div><div style="position:absolute;left:8.2px;top:568.76px;font-size:19.3px;line-height:19.3px;color:#fff;white-space:nowrap;">NDR Info Spezial</div><div style="position:absolute;left:8.2px;top:600.16px;font-size:19.3px;line-height:19.3px;color:#fff;white-space:nowrap;">NDR Kultur</div><div style="position:absolute;left:8.2px;top:631.56px;font-size:19.3px;line-height:19.3px;color:#fff;white-space:nowrap;">NDR Plus</div><div style="position:absolute;left:8.2px;top:662.96px;font-size:19.3px;line-height:19.3px;color:#fff;white-space:nowrap;">N-JOY</div><div style="position:absolute;left:216px;top:390px;width:6px;height:570px;background:#e9eaee;"></div><div style="position:absolute;left:229.7px;top:400.93px;font-size:23px;line-height:23px;color:#fff;white-space:nowrap;letter-spacing:1.7px;">Service Quality</div><div style="position:absolute;left:234.8px;top:454.98px;font-size:16.8px;line-height:16.8px;color:#fff;white-space:nowrap;">SNR (dB)</div><div style="position:absolute;left:384.5px;top:446.3px;width:11.5px;height:31px;background:#ff0000;"></div><div style="position:absolute;left:396.0px;top:446.3px;width:39px;height:31px;background:#888888;"></div><div style="position:absolute;left:110px;width:600px;text-align:center;top:455.63px;font-size:14.5px;line-height:14.5px;color:#fff;white-space:nowrap;">7.9</div><div style="position:absolute;left:234.8px;top:493.63px;font-size:16.8px;line-height:16.8px;color:#fff;white-space:nowrap;">FIC (ok %)</div><div style="position:absolute;left:384.5px;top:484.95px;width:50.5px;height:31px;background:#008000;"></div><div style="position:absolute;left:110px;width:600px;text-align:center;top:494.28px;font-size:14.5px;line-height:14.5px;color:#fff;white-space:nowrap;">100</div><div style="position:absolute;left:234.8px;top:532.28px;font-size:16.8px;line-height:16.8px;color:#fff;white-space:nowrap;">RS (ok %)</div><div style="position:absolute;left:384.5px;top:523.6px;width:50.5px;height:31px;background:#888888;"></div><div style="position:absolute;left:234.8px;top:570.93px;font-size:16.8px;line-height:16.8px;color:#fff;white-space:nowrap;">Null Symbol</div><div style="position:absolute;left:384.5px;top:562.25px;width:50.5px;height:31px;background:#008000;"></div><div style="position:absolute;left:234.8px;top:609.58px;font-size:16.8px;line-height:16.8px;color:#fff;white-space:nowrap;">SymbolTime (ms)</div><div style="position:absolute;left:384.5px;top:600.9px;width:9.3px;height:31px;background:#008000;"></div><div style="position:absolute;left:393.8px;top:600.9px;width:41.2px;height:31px;background:#888888;"></div><div style="position:absolute;left:110px;width:600px;text-align:center;top:610.23px;font-size:14.5px;line-height:14.5px;color:#fff;white-space:nowrap;">0.28</div><div style="position:absolute;left:234.8px;top:648.23px;font-size:16.8px;line-height:16.8px;color:#fff;white-space:nowrap;">FrameTime (ms)</div><div style="position:absolute;left:384.5px;top:639.55px;width:33px;height:31px;background:#008000;"></div><div style="position:absolute;left:417.5px;top:639.55px;width:17.5px;height:31px;background:#888888;"></div><div style="position:absolute;left:110px;width:600px;text-align:center;top:648.88px;font-size:14.5px;line-height:14.5px;color:#fff;white-space:nowrap;">95.5</div><div style="position:absolute;left:448px;top:390px;width:6px;height:570px;background:#0e2438;"></div><div style="position:absolute;left:449px;top:390px;width:4px;height:570px;background:#b8c4cc;"></div><div style="position:absolute;left:454px;top:390px;width:465px;height:570px;background:#1b5986;"></div><div style="position:absolute;left:454px;top:390px;width:465px;height:42px;background:linear-gradient(#0e2846,#11335a);"></div><div style="position:absolute;left:463px;top:399px;width:74px;height:34px;background:#878787;border-radius:4px 14px 0 0;border:1px solid #9c9c9c;border-bottom:none;"></div><div style="position:absolute;left:200.0px;width:600px;text-align:center;top:408.65px;font-size:20.5px;line-height:20.5px;color:#dadada;white-space:nowrap;">Sync</div><div style="position:absolute;left:538px;top:399px;width:54px;height:34px;background:#1b5986;border-radius:4px 14px 0 0;border:1px solid #3a77a6;border-bottom:none;"></div><div style="position:absolute;left:265.0px;width:600px;text-align:center;top:408.65px;font-size:20.5px;line-height:20.5px;color:#ffffff;white-space:nowrap;">TII</div><div style="position:absolute;left:593px;top:399px;width:87px;height:34px;background:#878787;border-radius:4px 14px 0 0;border:1px solid #9c9c9c;border-bottom:none;"></div><div style="position:absolute;left:336.5px;width:600px;text-align:center;top:408.65px;font-size:20.5px;line-height:20.5px;color:#dadada;white-space:nowrap;">Audio</div><div style="position:absolute;left:681px;top:399px;width:72px;height:34px;background:#878787;border-radius:4px 14px 0 0;border:1px solid #9c9c9c;border-bottom:none;"></div><div style="position:absolute;left:417.0px;width:600px;text-align:center;top:408.65px;font-size:20.5px;line-height:20.5px;color:#dadada;white-space:nowrap;">AAC</div><div style="position:absolute;left:754px;top:399px;width:106px;height:34px;background:#878787;border-radius:4px 14px 0 0;border:1px solid #9c9c9c;border-bottom:none;"></div><div style="position:absolute;left:507.0px;width:600px;text-align:center;top:408.65px;font-size:20.5px;line-height:20.5px;color:#dadada;white-space:nowrap;">Options</div><div style="position:absolute;left:495.8px;top:445.7px;width:11.8px;height:11.8px;border-radius:50%;background:#ff0a0a;"></div><div style="position:absolute;left:532.7px;top:445.2px;width:11.3px;height:12.5px;background:#0f2a45;"></div><div style="position:absolute;left:470.6px;top:469.8px;width:310.2px;height:1px;background:#a4c0d6;"></div><div style="position:absolute;left:793px;top:433px;width:1px;height:38px;background:#6a92b4;"></div><div style="position:absolute;left:800px;top:457.14px;font-size:17.2px;line-height:17.2px;color:#fff;white-space:nowrap;">Threshold</div><div style="position:absolute;left:472.2px;top:494.46px;font-size:18px;line-height:18px;color:#fff;white-space:nowrap;">Pattern</div><div style="position:absolute;left:556.2px;top:494.46px;font-size:18px;line-height:18px;color:#fff;white-space:nowrap;">MainId</div><div style="position:absolute;left:638.2px;top:494.46px;font-size:18px;line-height:18px;color:#fff;white-space:nowrap;">SubId</div><div style="position:absolute;left:710.5px;top:494.46px;font-size:18px;line-height:18px;color:#fff;white-space:nowrap;">Strength</div><div style="position:absolute;left:470.6px;top:514.6px;width:310.2px;height:1px;background:#a4c0d6;"></div><div style="position:absolute;left:473.6px;top:530.86px;font-size:18px;line-height:18px;color:#fff;white-space:nowrap;">0x56</div><div style="position:absolute;left:558px;top:530.86px;font-size:18px;line-height:18px;color:#fff;white-space:nowrap;">21</div><div style="position:absolute;left:640.6px;top:530.86px;font-size:18px;line-height:18px;color:#fff;white-space:nowrap;">2</div><div style="position:absolute;left:713.3px;top:530.86px;font-size:18px;line-height:18px;color:#fff;white-space:nowrap;">0.93</div><div style="position:absolute;left:833.3px;top:496.8px;width:3px;height:138px;background:#d6d6d6;border-radius:2px;"></div><div style="position:absolute;left:827.5px;top:629.7px;width:14.6px;height:14.6px;border-radius:50%;background:radial-gradient(circle at 50% 20%,#f2f2f2 0%,#b4b4b4 40%,#6e6e6e 95%);"></div><div style="position:absolute;left:533.3px;width:600px;text-align:center;top:656.81px;font-size:17px;line-height:17px;color:#fff;white-space:nowrap;">0.02</div><div style="position:absolute;left:1122.5px;width:600px;text-align:center;top:392.70px;font-size:17.6px;line-height:17.6px;color:#fff;white-space:nowrap;">Channel Impulse Response (CIR)</div><div style="position:absolute;left:937.5px;top:429.5px;width:16px;height:16px;border-radius:50%;background:#dcdcdc;"></div><div style="position:absolute;left:959.3px;top:432.15px;font-size:14px;line-height:14px;color:#fff;white-space:nowrap;letter-spacing:-0.3px;">Freeze</div><div style="position:absolute;left:1026.8px;top:429.5px;width:16px;height:16px;border-radius:50%;background:#dcdcdc;"></div><div style="position:absolute;left:1048px;top:431.30px;font-size:15px;line-height:15px;color:#fff;white-space:nowrap;">Gradient</div><div style="position:absolute;left:943.9px;top:482.30px;font-size:15px;line-height:15px;color:#fff;white-space:nowrap;">Smoothing Level</div><div style="position:absolute;left:946px;top:505.5px;width:1px;height:4px;background:#a8a8a8;"></div><div style="position:absolute;left:962px;top:505.5px;width:1px;height:4px;background:#a8a8a8;"></div><div style="position:absolute;left:979px;top:505.5px;width:1px;height:4px;background:#a8a8a8;"></div><div style="position:absolute;left:995px;top:505.5px;width:1px;height:4px;background:#a8a8a8;"></div><div style="position:absolute;left:1011px;top:505.5px;width:1px;height:4px;background:#a8a8a8;"></div><div style="position:absolute;left:1028px;top:505.5px;width:1px;height:4px;background:#a8a8a8;"></div><div style="position:absolute;left:1044px;top:505.5px;width:1px;height:4px;background:#a8a8a8;"></div><div style="position:absolute;left:1060px;top:505.5px;width:1px;height:4px;background:#a8a8a8;"></div><div style="position:absolute;left:1076px;top:505.5px;width:1px;height:4px;background:#a8a8a8;"></div><div style="position:absolute;left:1093px;top:505.5px;width:1px;height:4px;background:#a8a8a8;"></div><div style="position:absolute;left:1109px;top:505.5px;width:1px;height:4px;background:#a8a8a8;"></div><div style="position:absolute;left:938px;top:517.1px;width:172px;height:3px;background:#e4e4e4;border-radius:1px;"></div><div style="position:absolute;left:1019.8px;top:510.1px;width:17.0px;height:17.0px;border-radius:50%;background:radial-gradient(circle at 50% 20%,#f2f2f2 0%,#b4b4b4 40%,#6e6e6e 95%);"></div><div style="position:absolute;left:943.9px;top:549.60px;font-size:15px;line-height:15px;color:#fff;white-space:nowrap;">Zoom X</div><div style="position:absolute;left:938px;top:579.8px;width:172px;height:3px;background:#e4e4e4;border-radius:1px;"></div><div style="position:absolute;left:937.5px;top:572.8px;width:17.0px;height:17.0px;border-radius:50%;background:radial-gradient(circle at 50% 20%,#f2f2f2 0%,#b4b4b4 40%,#6e6e6e 95%);"></div><div style="position:absolute;left:943.9px;top:612.00px;font-size:15px;line-height:15px;color:#fff;white-space:nowrap;">Zoom Y</div><div style="position:absolute;left:938px;top:641.9px;width:172px;height:3px;background:#e4e4e4;border-radius:1px;"></div><div style="position:absolute;left:937.5px;top:634.9px;width:17.0px;height:17.0px;border-radius:50%;background:radial-gradient(circle at 50% 20%,#f2f2f2 0%,#b4b4b4 40%,#6e6e6e 95%);"></div><div style="position:absolute;left:943.9px;top:673.70px;font-size:15px;line-height:15px;color:#fff;white-space:nowrap;">x-Axis</div><div style="position:absolute;left:1118px;top:418px;width:6px;height:205px;background:#a8a8a8;border-radius:3px;"></div><div style="position:absolute;left:1131px;top:415px;width:1px;height:274px;background:#262626;"></div><div style="position:absolute;left:1022.3px;top:524px;width:300px;height:20px;line-height:20px;text-align:center;font-size:16.3px;-webkit-text-stroke:0.35px #fff;color:#fff;transform:rotate(-90deg);white-space:nowrap;">Magnitude (dB)</div><div style="position:absolute;left:1248px;top:436px;width:152px;height:194px;background:#424242;"></div><div style="position:absolute;left:1276px;top:436px;width:1px;height:194px;background:#a2a2a2;"></div><div style="position:absolute;left:1318px;top:436px;width:1px;height:194px;background:#a2a2a2;"></div><div style="position:absolute;left:1359px;top:436px;width:1px;height:194px;background:#a2a2a2;"></div><div style="position:absolute;left:1400px;top:436px;width:1px;height:194px;background:#a2a2a2;"></div><div style="position:absolute;left:1442px;top:436px;width:1px;height:194px;background:#a2a2a2;"></div><div style="position:absolute;left:1483px;top:436px;width:1px;height:194px;background:#a2a2a2;"></div><div style="position:absolute;left:1524px;top:436px;width:1px;height:194px;background:#a2a2a2;"></div><div style="position:absolute;left:1566px;top:436px;width:1px;height:194px;background:#a2a2a2;"></div><div style="position:absolute;left:1607px;top:436px;width:1px;height:194px;background:#a2a2a2;"></div><div style="position:absolute;left:1649px;top:436px;width:1px;height:194px;background:#a2a2a2;"></div><div style="position:absolute;left:1690px;top:436px;width:1px;height:194px;background:#a2a2a2;"></div><div style="position:absolute;left:1731px;top:436px;width:1px;height:194px;background:#a2a2a2;"></div><div style="position:absolute;left:1773px;top:436px;width:1px;height:194px;background:#a2a2a2;"></div><div style="position:absolute;left:1814px;top:436px;width:1px;height:194px;background:#a2a2a2;"></div><div style="position:absolute;left:1855px;top:436px;width:1px;height:194px;background:#a2a2a2;"></div><div style="position:absolute;left:1248px;top:474px;width:618px;height:1px;background:#a2a2a2;"></div><div style="position:absolute;left:1248px;top:513px;width:618px;height:1px;background:#a2a2a2;"></div><div style="position:absolute;left:1248px;top:553px;width:618px;height:1px;background:#a2a2a2;"></div><div style="position:absolute;left:1248px;top:592px;width:618px;height:1px;background:#a2a2a2;"></div><div style="position:absolute;left:1247px;top:434px;width:621px;height:2px;background:#9c9c9c;"></div><div style="position:absolute;left:1247px;top:630px;width:621px;height:1px;background:#a0a0a0;"></div><div style="position:absolute;left:1866px;top:434px;width:2px;height:197px;background:#9c9c9c;"></div><div style="position:absolute;left:1247px;top:434px;width:1px;height:197px;background:#b0a8b0;"></div><svg style="position:absolute;left:0;top:0;" width="1876" height="960"><line x1="1400.5" y1="436" x2="1400.5" y2="630" stroke="#e6e600" stroke-width="1" stroke-dasharray="2 2"/></svg><svg style="position:absolute;left:0;top:0;" width="1876" height="960"><path d="M1249.0 587.3 L1250.6 591.5 L1252.2 586.4 L1253.8 589.1 L1255.4 585.7 L1257.0 583.6 L1258.6 594.6 L1260.2 585.8 L1261.8 601.1 L1263.4 595.5 L1265.0 599.2 L1266.6 596.3 L1268.2 594.5 L1269.8 594.5 L1271.4 596.3 L1273.0 590.1 L1274.6 588.9 L1276.2 586.7 L1277.8 597.7 L1279.4 594.9 L1281.0 594.1 L1282.6 596.8 L1284.2 588.0 L1285.8 595.1 L1287.4 593.9 L1289.0 593.1 L1290.6 581.1 L1292.2 589.0 L1293.8 585.7 L1295.4 583.7 L1297.0 582.7 L1298.6 597.1 L1300.2 594.8 L1301.8 595.6 L1303.4 596.5 L1305.0 599.4 L1306.6 595.7 L1308.2 591.9 L1309.8 589.6 L1311.4 592.5 L1313.0 593.7 L1314.6 589.7 L1316.2 584.5 L1317.8 593.7 L1319.4 596.0 L1321.0 594.1 L1322.6 591.6 L1324.2 595.2 L1325.8 591.1 L1327.4 590.2 L1329.0 581.1 L1330.6 589.9 L1332.2 593.0 L1333.8 590.7 L1335.4 592.9 L1337.0 589.8 L1338.6 593.8 L1340.2 592.1 L1341.8 588.8 L1343.4 576.2 L1345.0 590.7 L1346.6 598.2 L1348.2 592.4 L1349.8 590.4 L1351.4 594.2 L1353.0 594.6 L1354.6 590.9 L1356.2 589.4 L1357.8 594.3 L1359.4 593.7 L1361.0 594.9 L1362.6 597.3 L1364.2 589.0 L1365.8 597.5 L1367.4 592.8 L1369.0 583.2 L1370.6 595.3 L1372.2 600.3 L1373.8 584.4 L1375.4 588.9 L1377.0 595.0 L1378.6 595.6 L1380.2 593.0 L1381.8 585.7 L1383.4 584.6 L1385.0 592.3 L1386.6 585.0 L1388.2 590.3 L1389.8 586.3 L1391.4 583.4 L1393.0 586.5 L1394.6 582.4 L1396.2 572.3 L1397.8 557.3 L1399.4 530.2 L1401.0 509.8 L1402.6 540.7 L1404.2 559.3 L1405.8 570.8 L1407.4 575.4 L1409.0 580.7 L1410.6 584.7 L1412.2 587.4 L1413.8 590.7 L1415.4 583.0 L1417.0 589.6 L1418.6 591.6 L1420.2 595.5 L1421.8 596.4 L1423.4 591.3 L1425.0 594.7 L1426.6 596.9 L1428.2 592.0 L1429.8 582.1 L1431.4 583.9 L1433.0 589.1 L1434.6 587.2 L1436.2 586.2 L1437.8 593.9 L1439.4 581.7 L1441.0 598.9 L1442.6 597.4 L1444.2 595.1 L1445.8 593.0 L1447.4 600.6 L1449.0 597.8 L1450.6 600.8 L1452.2 598.4 L1453.8 591.1 L1455.4 585.4 L1457.0 590.5 L1458.6 604.8 L1460.2 593.7 L1461.8 590.5 L1463.4 589.8 L1465.0 586.3 L1466.6 583.5 L1468.2 592.7 L1469.8 598.8 L1471.4 592.8 L1473.0 586.1 L1474.6 582.7 L1476.2 593.1 L1477.8 587.6 L1479.4 588.4 L1481.0 588.1 L1482.6 586.0 L1484.2 584.0 L1485.8 599.9 L1487.4 594.8 L1489.0 589.6 L1490.6 599.5 L1492.2 600.0 L1493.8 598.5 L1495.4 594.5 L1497.0 593.6 L1498.6 593.8 L1500.2 590.7 L1501.8 593.1 L1503.4 594.7 L1505.0 597.1 L1506.6 589.3 L1508.2 592.6 L1509.8 592.0 L1511.4 590.5 L1513.0 598.2 L1514.6 598.4 L1516.2 590.9 L1517.8 596.8 L1519.4 587.1 L1521.0 594.9 L1522.6 592.7 L1524.2 587.7 L1525.8 602.2 L1527.4 586.5 L1529.0 589.0 L1530.6 584.3 L1532.2 588.8 L1533.8 581.5 L1535.4 592.5 L1537.0 590.3 L1538.6 591.8 L1540.2 596.1 L1541.8 591.5 L1543.4 584.8 L1545.0 582.1 L1546.6 590.1 L1548.2 591.7 L1549.8 590.4 L1551.4 595.0 L1553.0 593.5 L1554.6 590.8 L1556.2 593.4 L1557.8 597.9 L1559.4 590.7 L1561.0 594.3 L1562.6 589.3 L1564.2 586.4 L1565.8 583.1 L1567.4 582.4 L1569.0 590.8 L1570.6 583.2 L1572.2 590.5 L1573.8 590.1 L1575.4 593.4 L1577.0 595.3 L1578.6 600.5 L1580.2 601.1 L1581.8 599.8 L1583.4 605.5 L1585.0 592.0 L1586.6 583.7 L1588.2 581.0 L1589.8 586.5 L1591.4 590.1 L1593.0 584.4 L1594.6 587.2 L1596.2 589.3 L1597.8 593.2 L1599.4 600.7 L1601.0 597.8 L1602.6 596.0 L1604.2 594.6 L1605.8 589.8 L1607.4 596.7 L1609.0 591.7 L1610.6 594.0 L1612.2 597.5 L1613.8 595.9 L1615.4 609.1 L1617.0 596.7 L1618.6 588.3 L1620.2 585.6 L1621.8 592.3 L1623.4 593.5 L1625.0 589.9 L1626.6 592.6 L1628.2 584.9 L1629.8 593.4 L1631.4 588.5 L1633.0 584.8 L1634.6 592.5 L1636.2 591.9 L1637.8 592.3 L1639.4 590.2 L1641.0 589.2 L1642.6 587.6 L1644.2 595.3 L1645.8 580.0 L1647.4 597.8 L1649.0 606.1 L1650.6 582.4 L1652.2 587.3 L1653.8 594.2 L1655.4 592.0 L1657.0 593.6 L1658.6 588.2 L1660.2 588.8 L1661.8 596.7 L1663.4 594.4 L1665.0 576.2 L1666.6 585.9 L1668.2 586.7 L1669.8 590.0 L1671.4 600.8 L1673.0 600.3 L1674.6 593.1 L1676.2 590.5 L1677.8 588.3 L1679.4 589.1 L1681.0 588.7 L1682.6 593.5 L1684.2 586.0 L1685.8 595.0 L1687.4 604.0 L1689.0 597.5 L1690.6 590.6 L1692.2 593.6 L1693.8 583.2 L1695.4 586.4 L1697.0 597.2 L1698.6 593.8 L1700.2 589.8 L1701.8 587.9 L1703.4 588.0 L1705.0 589.9 L1706.6 588.0 L1708.2 591.2 L1709.8 592.7 L1711.4 587.5 L1713.0 589.7 L1714.6 588.0 L1716.2 591.5 L1717.8 586.2 L1719.4 587.2 L1721.0 584.8 L1722.6 588.7 L1724.2 587.8 L1725.8 593.2 L1727.4 590.7 L1729.0 586.3 L1730.6 592.1 L1732.2 593.9 L1733.8 594.0 L1735.4 590.5 L1737.0 588.5 L1738.6 586.6 L1740.2 595.4 L1741.8 599.6 L1743.4 601.3 L1745.0 597.9 L1746.6 599.6 L1748.2 591.8 L1749.8 596.7 L1751.4 587.9 L1753.0 588.1 L1754.6 589.0 L1756.2 592.1 L1757.8 597.1 L1759.4 597.5 L1761.0 592.8 L1762.6 599.6 L1764.2 595.2 L1765.8 592.3 L1767.4 591.2 L1769.0 588.6 L1770.6 589.9 L1772.2 587.2 L1773.8 581.2 L1775.4 582.8 L1777.0 580.6 L1778.6 589.5 L1780.2 583.0 L1781.8 593.6 L1783.4 590.4 L1785.0 594.6 L1786.6 591.4 L1788.2 593.8 L1789.8 585.3 L1791.4 586.9 L1793.0 590.2 L1794.6 591.7 L1796.2 582.3 L1797.8 585.9 L1799.4 589.7 L1801.0 589.6 L1802.6 592.6 L1804.2 593.4 L1805.8 598.2 L1807.4 598.4 L1809.0 593.6 L1810.6 590.5 L1812.2 584.3 L1813.8 587.4 L1815.4 596.2 L1817.0 593.1 L1818.6 591.6 L1820.2 585.5 L1821.8 591.9 L1823.4 586.6 L1825.0 594.0 L1826.6 585.6 L1828.2 582.4 L1829.8 586.5 L1831.4 587.4 L1833.0 591.1 L1834.6 590.0 L1836.2 593.0 L1837.8 589.8 L1839.4 602.0 L1841.0 601.9 L1842.6 601.2 L1844.2 601.2 L1845.8 598.7 L1847.4 597.6 L1849.0 595.5 L1850.6 594.6 L1852.2 600.3 L1853.8 597.8 L1855.4 598.3 L1857.0 593.4 L1858.6 597.9 L1860.2 594.6 L1861.8 602.4 L1863.4 587.3 L1865.0 586.8" fill="none" stroke="#f2f2f2" stroke-width="1.5"/><circle cx="1401" cy="506" r="4.6" fill="#f0e000"/></svg><div style="position:absolute;left:937.4000000000001px;width:300px;text-align:right;top:426.75px;font-size:16.6px;line-height:16.6px;color:#fff;white-space:nowrap;">-20.0</div><div style="position:absolute;left:937.4000000000001px;width:300px;text-align:right;top:466.25px;font-size:16.6px;line-height:16.6px;color:#fff;white-space:nowrap;">-30.0</div><div style="position:absolute;left:937.4000000000001px;width:300px;text-align:right;top:505.25px;font-size:16.6px;line-height:16.6px;color:#fff;white-space:nowrap;">-40.0</div><div style="position:absolute;left:937.4000000000001px;width:300px;text-align:right;top:545.25px;font-size:16.6px;line-height:16.6px;color:#fff;white-space:nowrap;">-50.0</div><div style="position:absolute;left:937.4000000000001px;width:300px;text-align:right;top:584.25px;font-size:16.6px;line-height:16.6px;color:#fff;white-space:nowrap;">-60.0</div><div style="position:absolute;left:937.4000000000001px;width:300px;text-align:right;top:622.25px;font-size:16.6px;line-height:16.6px;color:#fff;white-space:nowrap;">-70.0</div><div style="position:absolute;left:976.5px;width:600px;text-align:center;top:636.15px;font-size:14px;line-height:14px;color:#fff;white-space:nowrap;">-60</div><div style="position:absolute;left:1018.5px;width:600px;text-align:center;top:636.15px;font-size:14px;line-height:14px;color:#fff;white-space:nowrap;">-40</div><div style="position:absolute;left:1059.5px;width:600px;text-align:center;top:636.15px;font-size:14px;line-height:14px;color:#fff;white-space:nowrap;">-20</div><div style="position:absolute;left:1100.5px;width:600px;text-align:center;top:636.15px;font-size:14px;line-height:14px;color:#fff;white-space:nowrap;">0</div><div style="position:absolute;left:1142.5px;width:600px;text-align:center;top:636.15px;font-size:14px;line-height:14px;color:#fff;white-space:nowrap;">20</div><div style="position:absolute;left:1183.5px;width:600px;text-align:center;top:636.15px;font-size:14px;line-height:14px;color:#fff;white-space:nowrap;">40</div><div style="position:absolute;left:1224.5px;width:600px;text-align:center;top:636.15px;font-size:14px;line-height:14px;color:#fff;white-space:nowrap;">60</div><div style="position:absolute;left:1266.5px;width:600px;text-align:center;top:636.15px;font-size:14px;line-height:14px;color:#fff;white-space:nowrap;">80</div><div style="position:absolute;left:1307.5px;width:600px;text-align:center;top:636.15px;font-size:14px;line-height:14px;color:#fff;white-space:nowrap;">100</div><div style="position:absolute;left:1349.5px;width:600px;text-align:center;top:636.15px;font-size:14px;line-height:14px;color:#fff;white-space:nowrap;">120</div><div style="position:absolute;left:1390.5px;width:600px;text-align:center;top:636.15px;font-size:14px;line-height:14px;color:#fff;white-space:nowrap;">140</div><div style="position:absolute;left:1431.5px;width:600px;text-align:center;top:636.15px;font-size:14px;line-height:14px;color:#fff;white-space:nowrap;">160</div><div style="position:absolute;left:1473.5px;width:600px;text-align:center;top:636.15px;font-size:14px;line-height:14px;color:#fff;white-space:nowrap;">180</div><div style="position:absolute;left:1514.5px;width:600px;text-align:center;top:636.15px;font-size:14px;line-height:14px;color:#fff;white-space:nowrap;">200</div><div style="position:absolute;left:1555.5px;width:600px;text-align:center;top:636.15px;font-size:14px;line-height:14px;color:#fff;white-space:nowrap;">220</div><div style="position:absolute;left:1257.7px;width:600px;text-align:center;top:657.91px;font-size:17px;line-height:17px;color:#fff;white-space:nowrap;">Distance Difference (km)</div><div style="position:absolute;left:1122.5px;width:600px;text-align:center;top:697.80px;font-size:17.6px;line-height:17.6px;color:#fff;white-space:nowrap;">TII Carriers</div><div style="position:absolute;left:1085px;top:740px;width:1px;height:164px;background:#a2a2a2;"></div><div style="position:absolute;left:1166px;top:740px;width:1px;height:164px;background:#a2a2a2;"></div><div style="position:absolute;left:1246px;top:740px;width:1px;height:164px;background:#a2a2a2;"></div><div style="position:absolute;left:1327px;top:740px;width:1px;height:164px;background:#a2a2a2;"></div><div style="position:absolute;left:1407px;top:740px;width:1px;height:164px;background:#a2a2a2;"></div><div style="position:absolute;left:1488px;top:740px;width:1px;height:164px;background:#a2a2a2;"></div><div style="position:absolute;left:1568px;top:740px;width:1px;height:164px;background:#a2a2a2;"></div><div style="position:absolute;left:1649px;top:740px;width:1px;height:164px;background:#a2a2a2;"></div><div style="position:absolute;left:1729px;top:740px;width:1px;height:164px;background:#a2a2a2;"></div><div style="position:absolute;left:1809px;top:740px;width:1px;height:164px;background:#a2a2a2;"></div><div style="position:absolute;left:1036px;top:772px;width:822px;height:1px;background:#a2a2a2;"></div><div style="position:absolute;left:1036px;top:805px;width:822px;height:1px;background:#a2a2a2;"></div><div style="position:absolute;left:1036px;top:839px;width:822px;height:1px;background:#a2a2a2;"></div><div style="position:absolute;left:1036px;top:872px;width:822px;height:1px;background:#a2a2a2;"></div><div style="position:absolute;left:1034px;top:738px;width:826px;height:2px;background:#9c9c9c;"></div><div style="position:absolute;left:1034px;top:904px;width:826px;height:1px;background:#a0a0a0;"></div><div style="position:absolute;left:1858px;top:738px;width:2px;height:167px;background:#9c9c9c;"></div><div style="position:absolute;left:1034px;top:738px;width:2px;height:167px;background:#cc5050;"></div><svg style="position:absolute;left:0;top:0;" width="1876" height="960"><line x1="1139" y1="740" x2="1139" y2="904" stroke="#e0e020" stroke-width="2" stroke-dasharray="2 2"/><line x1="1293.5" y1="740" x2="1293.5" y2="904" stroke="#e0e020" stroke-width="2" stroke-dasharray="2 2"/><line x1="1448" y1="740" x2="1448" y2="904" stroke="#e0e020" stroke-width="2" stroke-dasharray="2 2"/><line x1="1602.5" y1="740" x2="1602.5" y2="904" stroke="#e0e020" stroke-width="2" stroke-dasharray="2 2"/><line x1="1757.5" y1="740" x2="1757.5" y2="904" stroke="#e0e020" stroke-width="2" stroke-dasharray="2 2"/><line x1="1145.0" y1="904" x2="1145.0" y2="890.0" stroke="#a8a8b4" stroke-width="2"/><line x1="1160.6" y1="904" x2="1160.6" y2="820.3" stroke="#e6e6e6" stroke-width="2"/><line x1="1199.0" y1="904" x2="1199.0" y2="766.6" stroke="#e6e6e6" stroke-width="2"/><line x1="1237.5" y1="904" x2="1237.5" y2="810.9" stroke="#e6e6e6" stroke-width="2"/><line x1="1257.0" y1="904" x2="1257.0" y2="801.0" stroke="#e6e6e6" stroke-width="2"/><line x1="1301.4" y1="904" x2="1301.4" y2="887.5" stroke="#a8a8b4" stroke-width="2"/><line x1="1314.8" y1="904" x2="1314.8" y2="778.6" stroke="#e6e6e6" stroke-width="2"/><line x1="1353.6" y1="904" x2="1353.6" y2="811.3" stroke="#e6e6e6" stroke-width="2"/><line x1="1392.0" y1="904" x2="1392.0" y2="778.6" stroke="#e6e6e6" stroke-width="2"/><line x1="1411.3" y1="904" x2="1411.3" y2="802.5" stroke="#e6e6e6" stroke-width="2"/><line x1="1457.4" y1="904" x2="1457.4" y2="900.0" stroke="#a8a8b4" stroke-width="2"/><line x1="1470.0" y1="904" x2="1470.0" y2="805.0" stroke="#e6e6e6" stroke-width="2"/><line x1="1508.1" y1="904" x2="1508.1" y2="785.9" stroke="#e6e6e6" stroke-width="2"/><line x1="1547.0" y1="904" x2="1547.0" y2="779.4" stroke="#e6e6e6" stroke-width="2"/><line x1="1566.5" y1="904" x2="1566.5" y2="788.5" stroke="#e6e6e6" stroke-width="2"/><line x1="1594.8" y1="904" x2="1594.8" y2="894.9" stroke="#a8a8b4" stroke-width="2"/><line x1="1624.5" y1="904" x2="1624.5" y2="739.8" stroke="#e6e6e6" stroke-width="2"/><line x1="1663.0" y1="904" x2="1663.0" y2="781.9" stroke="#e6e6e6" stroke-width="2"/><line x1="1701.8" y1="904" x2="1701.8" y2="744.0" stroke="#e6e6e6" stroke-width="2"/><line x1="1720.8" y1="904" x2="1720.8" y2="758.8" stroke="#e6e6e6" stroke-width="2"/></svg><div style="position:absolute;left:1036px;top:902px;width:102px;height:1.5px;background:#b8b8b8;"></div><div style="position:absolute;left:1758px;top:902px;width:100px;height:1.5px;background:#b8b8b8;"></div><div style="position:absolute;left:722.3px;width:300px;text-align:right;top:731.03px;font-size:16.5px;line-height:16.5px;color:#fff;white-space:nowrap;">1.0</div><div style="position:absolute;left:722.3px;width:300px;text-align:right;top:764.03px;font-size:16.5px;line-height:16.5px;color:#fff;white-space:nowrap;">0.8</div><div style="position:absolute;left:722.3px;width:300px;text-align:right;top:797.03px;font-size:16.5px;line-height:16.5px;color:#fff;white-space:nowrap;">0.6</div><div style="position:absolute;left:722.3px;width:300px;text-align:right;top:830.03px;font-size:16.5px;line-height:16.5px;color:#fff;white-space:nowrap;">0.4</div><div style="position:absolute;left:722.3px;width:300px;text-align:right;top:863.03px;font-size:16.5px;line-height:16.5px;color:#fff;white-space:nowrap;">0.2</div><div style="position:absolute;left:722.3px;width:300px;text-align:right;top:896.03px;font-size:16.5px;line-height:16.5px;color:#fff;white-space:nowrap;">0.0</div><div style="position:absolute;left:785.5px;width:600px;text-align:center;top:910.43px;font-size:16.5px;line-height:16.5px;color:#fff;white-space:nowrap;">-900</div><div style="position:absolute;left:866.5px;width:600px;text-align:center;top:910.43px;font-size:16.5px;line-height:16.5px;color:#fff;white-space:nowrap;">-700</div><div style="position:absolute;left:946.5px;width:600px;text-align:center;top:910.43px;font-size:16.5px;line-height:16.5px;color:#fff;white-space:nowrap;">-500</div><div style="position:absolute;left:1027.5px;width:600px;text-align:center;top:910.43px;font-size:16.5px;line-height:16.5px;color:#fff;white-space:nowrap;">-300</div><div style="position:absolute;left:1107.5px;width:600px;text-align:center;top:910.43px;font-size:16.5px;line-height:16.5px;color:#fff;white-space:nowrap;">-100</div><div style="position:absolute;left:1188.5px;width:600px;text-align:center;top:910.43px;font-size:16.5px;line-height:16.5px;color:#fff;white-space:nowrap;">100</div><div style="position:absolute;left:1268.5px;width:600px;text-align:center;top:910.43px;font-size:16.5px;line-height:16.5px;color:#fff;white-space:nowrap;">300</div><div style="position:absolute;left:1349.5px;width:600px;text-align:center;top:910.43px;font-size:16.5px;line-height:16.5px;color:#fff;white-space:nowrap;">500</div><div style="position:absolute;left:1429.5px;width:600px;text-align:center;top:910.43px;font-size:16.5px;line-height:16.5px;color:#fff;white-space:nowrap;">700</div><div style="position:absolute;left:1509.5px;width:600px;text-align:center;top:910.43px;font-size:16.5px;line-height:16.5px;color:#fff;white-space:nowrap;">900</div><div style="position:absolute;left:1147.5px;width:600px;text-align:center;top:933.58px;font-size:16.8px;line-height:16.8px;color:#fff;white-space:nowrap;">TII Subcarrier</div><div style="position:absolute;left:822.6px;top:811.5px;width:300px;height:20px;line-height:20px;text-align:center;font-size:16.3px;-webkit-text-stroke:0.45px #fff;color:#fff;transform:rotate(-90deg);white-space:nowrap;">Magnitude</div>
</body></html>
